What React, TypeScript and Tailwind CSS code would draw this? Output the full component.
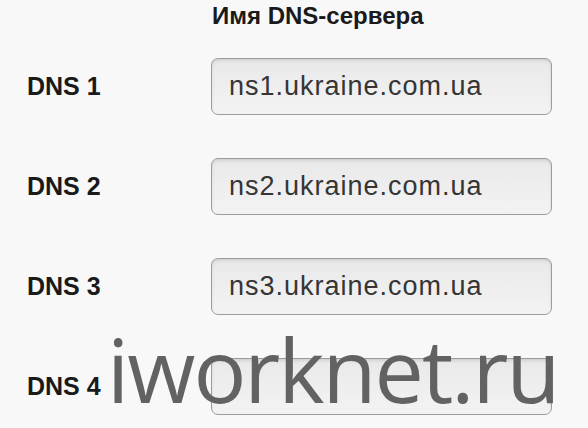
import React from 'react';

const servers = ['ns1.ukraine.com.ua', 'ns2.ukraine.com.ua', 'ns3.ukraine.com.ua', ''];

const DnsRow: React.FC<{ label: string; value: string }> = ({ label, value }) => (
    <div className="flex items-center h-[57px]">
        <div className="w-[211px] pl-[27px] text-[25px] font-bold text-[#1a1a1a] leading-none">{label}</div>
        <div className="w-[341px] h-[57px] flex items-center pl-[17px] rounded-[7px] border border-[#9c9c9c] bg-gradient-to-b from-[#e9e9e9] to-[#f3f3f3] shadow-[inset_0_2px_3px_rgba(0,0,0,0.1)] text-[27px] tracking-[1px] text-[#353535]">
            {value}
        </div>
    </div>
);

export default function App() {
    return (
        <div className="relative w-[588px] h-[428px] overflow-hidden bg-[#f8f8f8] font-['Liberation_Sans',Arial,sans-serif]">
            <div className="h-[32px] pl-[212px] flex items-center text-[24px] font-bold text-[#1a1a1a]">
                Имя DNS-сервера
            </div>
            <div className="mt-[26px] flex flex-col gap-[43px]">
                {servers.map((s, i) => (
                    <DnsRow key={i} label={`DNS ${i + 1}`} value={s} />
                ))}
            </div>
            {/* watermark */}
            <div className="absolute left-[107px] top-[325px] text-[88px] tracking-[-2px] leading-none text-[#626262] font-['Open_Sans',sans-serif] pointer-events-none">
                iworknet.ru
            </div>
        </div>
    );
}
